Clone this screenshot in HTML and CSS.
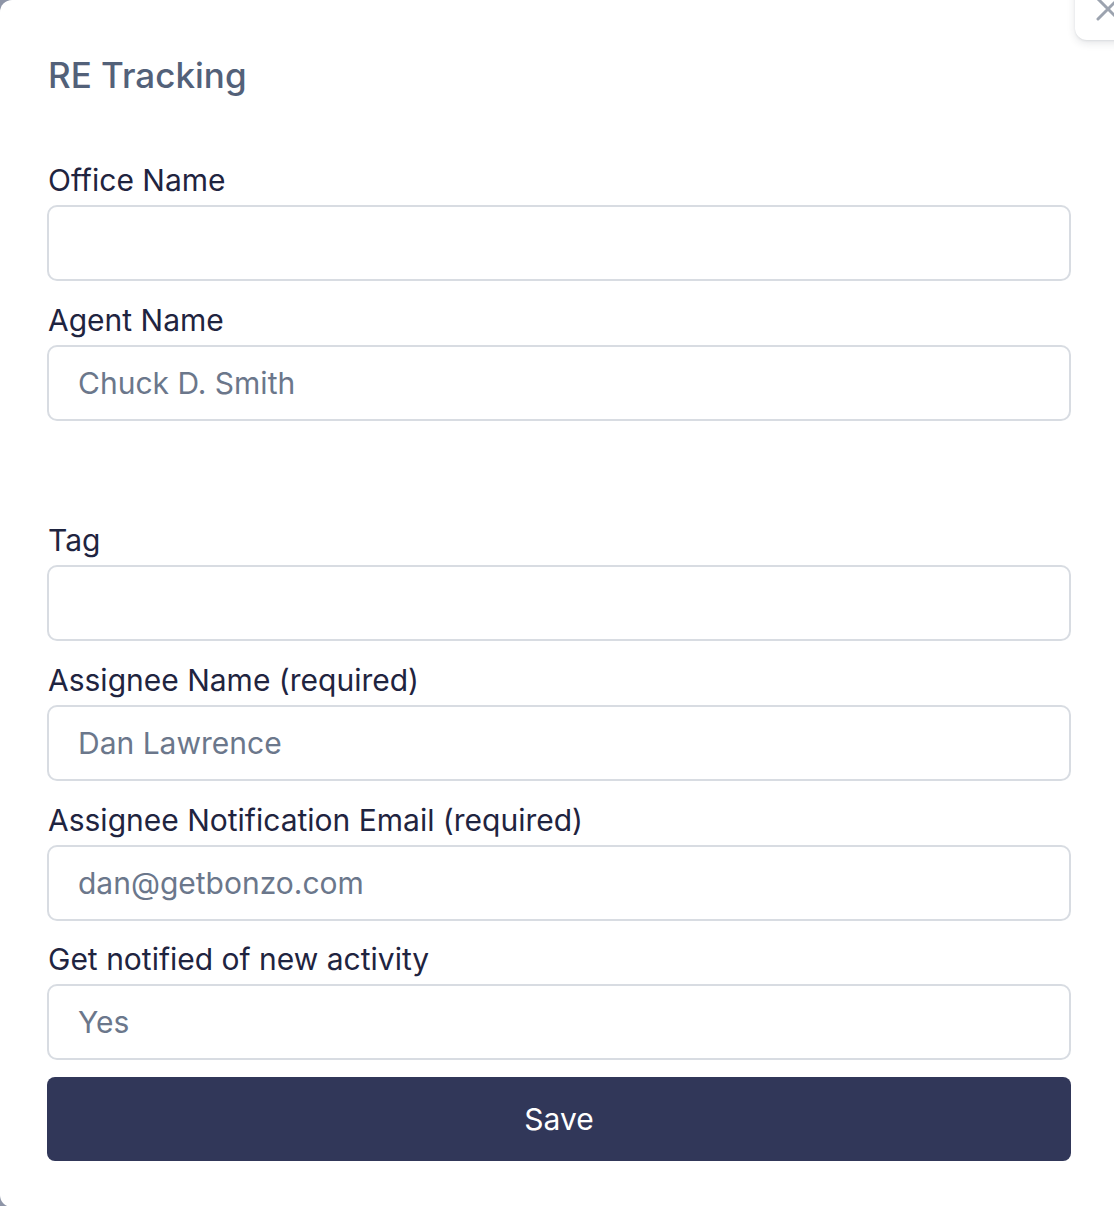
FILE: index.html
```html
<!DOCTYPE html>
<html lang="en">
<head>
<meta charset="utf-8">
<title>RE Tracking</title>
<link rel="stylesheet" href="styles.css">
</head>
<body>
<div class="modal">
  <button class="close" aria-label="Close">
    <svg width="24" height="24" viewBox="0 0 24 24"><path d="M2 2 L22 22 M22 2 L2 22" stroke="#9ca3af" stroke-width="3" stroke-linecap="round" fill="none"/></svg>
  </button>
  <h1 class="title">RE Tracking</h1>
  <form class="form">
    <div class="field">
      <label class="label">Office Name</label>
      <input class="input" type="text">
    </div>
    <div class="field">
      <label class="label">Agent Name</label>
      <input class="input" type="text" placeholder="Chuck D. Smith">
    </div>
    <div class="spacer"></div>
    <div class="field">
      <label class="label">Tag</label>
      <input class="input" type="text">
    </div>
    <div class="field">
      <label class="label">Assignee Name (required)</label>
      <input class="input" type="text" placeholder="Dan Lawrence">
    </div>
    <div class="field">
      <label class="label">Assignee Notification Email (required)</label>
      <input class="input" type="text" placeholder="dan@getbonzo.com">
    </div>
    <div class="field last">
      <label class="label">Get notified of new activity</label>
      <input class="input" type="text" placeholder="Yes">
    </div>
    <button class="save" type="button">Save</button>
  </form>
</div>
</body>
</html>
```
FILE: styles.css
```css
* { box-sizing: border-box; }
html, body { margin: 0; padding: 0; }
body {
  background: #8e95a7;
  overflow: hidden;
  width: 1114px;
  height: 1206px;
  font-family: Inter, "Noto Sans", sans-serif;
}
.modal {
  position: relative;
  width: 1140px;
  height: 1207px;
  background: #ffffff;
  border-radius: 12px;
  padding: 53px 0 0 47px;
}
.close {
  position: absolute;
  left: 1075px;
  top: -24px;
  width: 64px;
  height: 64px;
  border: none;
  background: #ffffff;
  border-radius: 12px;
  box-shadow: 0 3px 8px rgba(30, 40, 60, 0.12), 0 1px 2px rgba(30, 40, 60, 0.08);
  padding: 0;
}
.close svg {
  position: absolute;
  left: 21px;
  top: 21px;
}
.title {
  margin: 0 0 0 1px;
  font-size: 35px;
  line-height: 44px;
  font-weight: 500;
  color: #536179;
}
.form {
  width: 1024px;
  margin-top: 65px;
  display: flex;
  flex-direction: column;
}
.field {
  display: flex;
  flex-direction: column;
  margin-bottom: 20.75px;
}
.field.last { margin-bottom: 17px; }
.spacer { height: 80.5px; }
.label {
  font-size: 30px;
  line-height: 36px;
  color: #1f2440;
  margin-bottom: 7px;
  padding-left: 1px;
}
.input {
  height: 76px;
  width: 100%;
  border: 2px solid #d8dce2;
  border-radius: 10px;
  padding: 0 28px 0 29px;
  font-family: inherit;
  font-size: 30px;
  color: #1f2440;
  background: #ffffff;
  outline: none;
}
.input::placeholder { color: #6b778b; }
.save {
  height: 84px;
  width: 100%;
  border: none;
  border-radius: 8px;
  background: #313759;
  color: #ffffff;
  font-family: inherit;
  font-size: 30px;
}
```
